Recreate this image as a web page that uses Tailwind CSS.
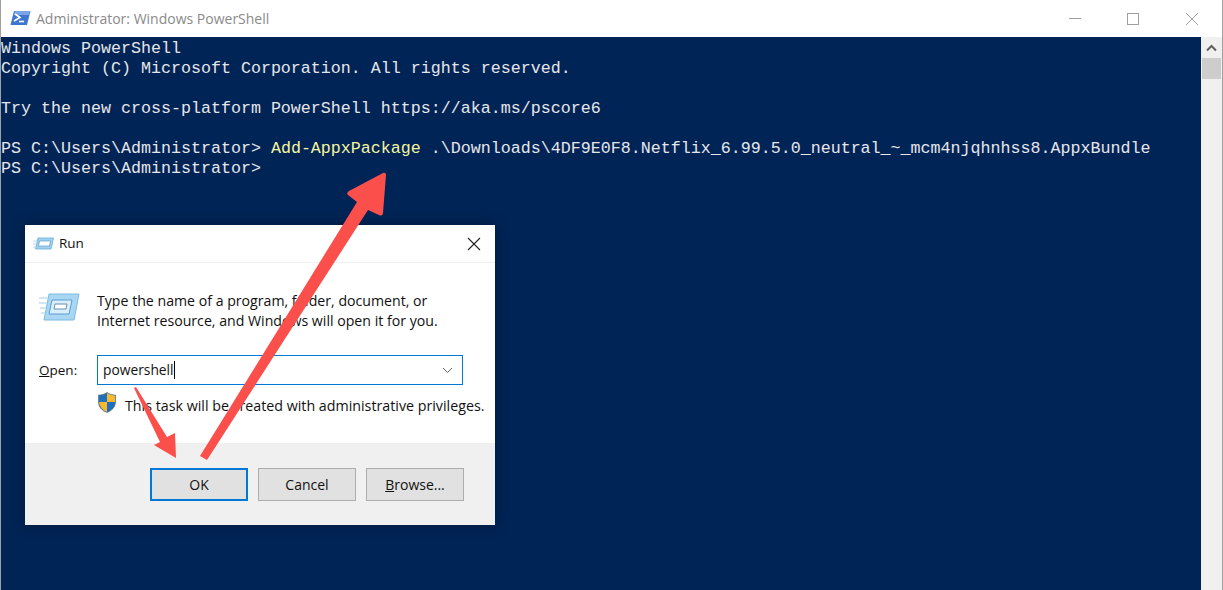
<!DOCTYPE html>
<html>
<head>
<meta charset="utf-8">
<script src="https://cdn.jsdelivr.net/npm/@tailwindcss/browser@4"></script>
</head>
<body class="m-0 overflow-hidden bg-white">
<div class="relative w-[1223px] h-[590px] overflow-hidden flex flex-col border-x border-[#a0a0a0] font-['Open_Sans',sans-serif]">
  <!-- title bar -->
  <div class="h-[37px] shrink-0 bg-white flex items-center">
    <svg class="ml-[9px] mt-[-1px]" width="21" height="16" viewBox="0 0 21 16"><path d="M4 1H20.500L17 15H.5Z" fill="#3f77d0"/><path d="M5 1H20L19 5H4Z" fill="#7aa4e4"/><path d="M5 4L10 7.500L4 11" fill="none" stroke="#fff" stroke-width="1.6"/><path d="M9 11.500H14" stroke="#fff" stroke-width="1.6"/></svg>
    <span class="ml-[5px] text-[14px] text-[#8a8a8a]">Administrator: Windows PowerShell</span>
    <div class="ml-auto flex items-center">
      <svg width="14" height="14" viewBox="0 0 14 14" class="mr-[44px]"><path d="M1 6.500H13" stroke="#a0a0a0"/></svg>
      <svg width="14" height="14" viewBox="0 0 14 14" class="mr-[45px]"><rect x="1.500" y="1.500" width="11" height="11" fill="none" stroke="#a0a0a0"/></svg>
      <svg width="14" height="14" viewBox="0 0 14 14" class="mr-[23px]"><path d="M1 1L13 13M13 1L1 13" stroke="#a0a0a0"/></svg>
    </div>
  </div>
  <!-- console -->
  <div class="flex-1 flex min-h-0">
    <pre class="flex-1 bg-[#012456] text-[#e6e6ea] font-['Liberation_Mono',monospace] text-[16.67px] leading-[20px] m-0 pt-[2px]">Windows PowerShell
Copyright (C) Microsoft Corporation. All rights reserved.

Try the new cross-platform PowerShell https://aka.ms/pscore6

PS C:\Users\Administrator&gt; <span class="text-[#f4f4a0]">Add-AppxPackage</span> .\Downloads\4DF9E0F8.Netflix_6.99.5.0_neutral_~_mcm4njqhnhss8.AppxBundle
PS C:\Users\Administrator&gt;</pre>
    <div class="w-[21px] shrink-0 bg-[#f0f0f0] flex flex-col">
      <div class="h-[21px] flex items-center justify-center">
        <svg width="11" height="8" viewBox="0 0 11 8"><path d="M1 6.500L5.500 2L10 6.500" fill="none" stroke="#606060" stroke-width="2"/></svg>
      </div>
      <div class="h-[21px] mx-px bg-[#cdcdcd]"></div>
    </div>
  </div>

  <!-- Run dialog -->
  <div class="absolute left-[24px] top-[225px] w-[470px] h-[300px] bg-white flex flex-col shadow-[0_0_12px_rgba(0,0,0,0.35)] text-[14.15px] text-[#111]">
    <div class="h-[38px] shrink-0 border-b border-[#f0f0f0] flex items-center pl-[8px] pr-[14px]">
      <svg width="21" height="14" viewBox="0 0 21 14"><path d="M5 1H20.500L18 12H2.500Z" fill="#9fd0ee" stroke="#6aaed8" stroke-width=".8"/><path d="M6.500 4H17.500L16.500 9H5.500Z" fill="#fff" stroke="#5f9fcc" stroke-width=".7"/><path d="M0 4H4M0 7H3M0 10H3" stroke="#b8dcf2"/></svg>
      <span class="ml-[5px] text-[13.5px]">Run</span>
      <svg class="ml-auto" width="14" height="14" viewBox="0 0 14 14"><path d="M1 1L13 13M13 1L1 13" stroke="#222" stroke-width="1.1"/></svg>
    </div>
    <div class="flex-1 flex flex-col pl-[14px] pt-[28px]">
      <div class="flex items-start">
        <svg class="mt-[2px]" width="41" height="30" viewBox="0 0 41 30"><path d="M10 1H40L35 27H5Z" fill="#a9d6f2" stroke="#7bbce4"/><path d="M13 7H33L30 21H10Z" fill="#d9eefb" stroke="#5b9fd0"/><path d="M16 11H28L27 16H15Z" fill="#fff" stroke="#6a8fb0"/><path d="M0 5H9M0 10H8M1 15H7M2 20H6" stroke="#cfe6f5" stroke-width="2"/></svg>
        <p class="ml-[17px] leading-[20px] whitespace-nowrap">Type the name of a program, folder, document, or<br>Internet resource, and Windows will open it for you.</p>
      </div>
      <div class="flex items-center mt-[24px]">
        <span class="w-[58px] text-[13.5px]"><span class="underline">O</span>pen:</span>
        <div class="w-[366px] h-[30px] border border-[#0078d7] flex items-center pl-[5px] pr-[9px] text-[13.8px]">
          <span>powershell</span><span class="w-px h-[18px] bg-black"></span>
          <svg class="ml-auto" width="11" height="7" viewBox="0 0 11 7"><path d="M1 1L5.500 5.500L10 1" fill="none" stroke="#666"/></svg>
        </div>
      </div>
      <div class="flex items-start mt-[7px] ml-[58px]">
        <svg width="20" height="21" viewBox="0 0 20 21"><path d="M10 .5C7 2.500 4 3 1.500 3V10C1.500 15 5 18.500 10 20.500C15 18.500 18.500 15 18.500 10V3C16 3 13 2.500 10 .5Z" fill="#1f6fc0" stroke="#666" stroke-width=".6"/><path d="M10 1V10H18V3.500C15 3.200 12.500 2.500 10 1Z" fill="#f8b92d"/><path d="M10 10H2C2.500 14.500 5.500 18 10 20Z" fill="#f8b92d"/></svg>
        <span class="ml-[8px] mt-[3px] text-[14.25px] whitespace-nowrap">This task will be created with administrative privileges.</span>
      </div>
    </div>
    <div class="h-[82px] shrink-0 bg-[#f0f0f0] flex items-start justify-end gap-[10px] pt-[25px] pr-[31px] text-[14px]">
      <div class="w-[98px] h-[33px] bg-[#e1e1e1] border-2 border-[#0078d7] flex items-center justify-center">OK</div>
      <div class="w-[98px] h-[33px] bg-[#e1e1e1] border border-[#adadad] flex items-center justify-center">Cancel</div>
      <div class="w-[98px] h-[33px] bg-[#e1e1e1] border border-[#adadad] flex items-center justify-center"><span><span class="underline">B</span>rowse...</span></div>
    </div>
  </div>

  <!-- annotation arrows -->
  <svg class="absolute left-[-1px] top-0 pointer-events-none" width="1223" height="590" viewBox="0 0 1223 590">
    <path d="M200 456L207 460L368 210L380 215.500Q383 216 383 213L386 175Q386 172 383 173L349 191Q346 193 348 195L357 202Z" fill="#fb4f4c"/>
    <path d="M134 388L136 387L167 437L175 433L176 458L154 445L160 442Z" fill="#fb4f4c"/>
  </svg>
</div>
</body>
</html>
